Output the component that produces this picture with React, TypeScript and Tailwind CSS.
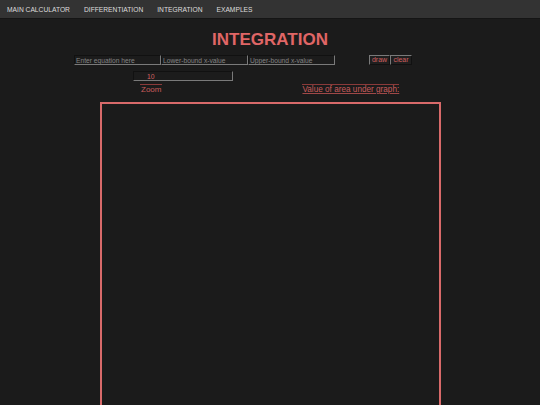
import React from 'react';

const navItems = ['MAIN CALCULATOR', 'DIFFERENTIATION', 'INTEGRATION', 'EXAMPLES'];

export default function App() {
  const inputCls =
    'w-[87px] h-[10px] bg-[#1c1c1c] border border-t-[#111] border-l-[#111] border-b-[#7a7a7a] border-r-[#7a7a7a] px-[1px] text-[6.7px] leading-[8px] text-[#c06060] placeholder:text-[#858585] outline-none';

  return (
    <div className="min-h-[405px] h-[405px] overflow-hidden bg-[#1b1b1b] font-['Liberation_Sans',Arial,sans-serif]">
      {/* Nav */}
      <div className="h-[19px] bg-[#333333] flex items-center border-b border-[#151515]">
        {navItems.map(item => (
          <span key={item} className="px-[7px] text-[6.7px] leading-[19px] text-[#dddddd]">
            {item}
          </span>
        ))}
      </div>

      {/* Title */}
      <h1 className="mt-[12px] text-center text-[17px] leading-[17px] font-bold text-[#e06666]">INTEGRATION</h1>

      {/* Inputs row */}
      <div className="mt-[7px] flex items-center ml-[74px]">
        <input className={inputCls} placeholder="Enter equation here" />
        <input className={inputCls} placeholder="Lower-bound x-value" />
        <input className={inputCls} placeholder="Upper-bound x-value" />
        <div className="ml-[34px] flex">
          <button className="h-[10px] w-[21px] bg-[#1f1f1f] border border-t-[#7a7a7a] border-l-[#7a7a7a] border-b-[#111] border-r-[#111] text-[7px] leading-[8px] text-[#d06060]">
            draw
          </button>
          <button className="h-[10px] w-[22px] bg-[#1f1f1f] border border-t-[#7a7a7a] border-l-[#7a7a7a] border-b-[#111] border-r-[#111] text-[7px] leading-[8px] text-[#d06060]">
            clear
          </button>
        </div>
      </div>

      {/* Zoom input */}
      <div className="mt-[6px] ml-[133px] flex">
        <input
          className="w-[100px] h-[10px] bg-[#1c1c1c] border border-t-[#111] border-l-[#111] border-b-[#7a7a7a] border-r-[#7a7a7a] pl-[13px] text-[6.8px] leading-[8px] text-[#d06060] outline-none"
          defaultValue="10"
        />
      </div>

      {/* Labels */}
      <div className="mt-[3px] flex items-start">
        <span className="ml-[140px] border-t border-[#8a3a3a] px-[1px] pt-[1px] text-[8px] leading-[8px] text-[#c85c5c]">
          Zoom
        </span>
        <span className="ml-[140px] border-t border-[#8a3a3a] pt-[1px] text-[8.2px] leading-[8px] text-[#c85c5c] underline decoration-[#a04848]">
          Value of area under graph:
        </span>
      </div>

      {/* Canvas */}
      <div className="mt-[8px] ml-[100px] w-[341px] h-[340px] border-2 border-[#d86a6a] bg-[#1b1b1b]" />
    </div>
  );
}
